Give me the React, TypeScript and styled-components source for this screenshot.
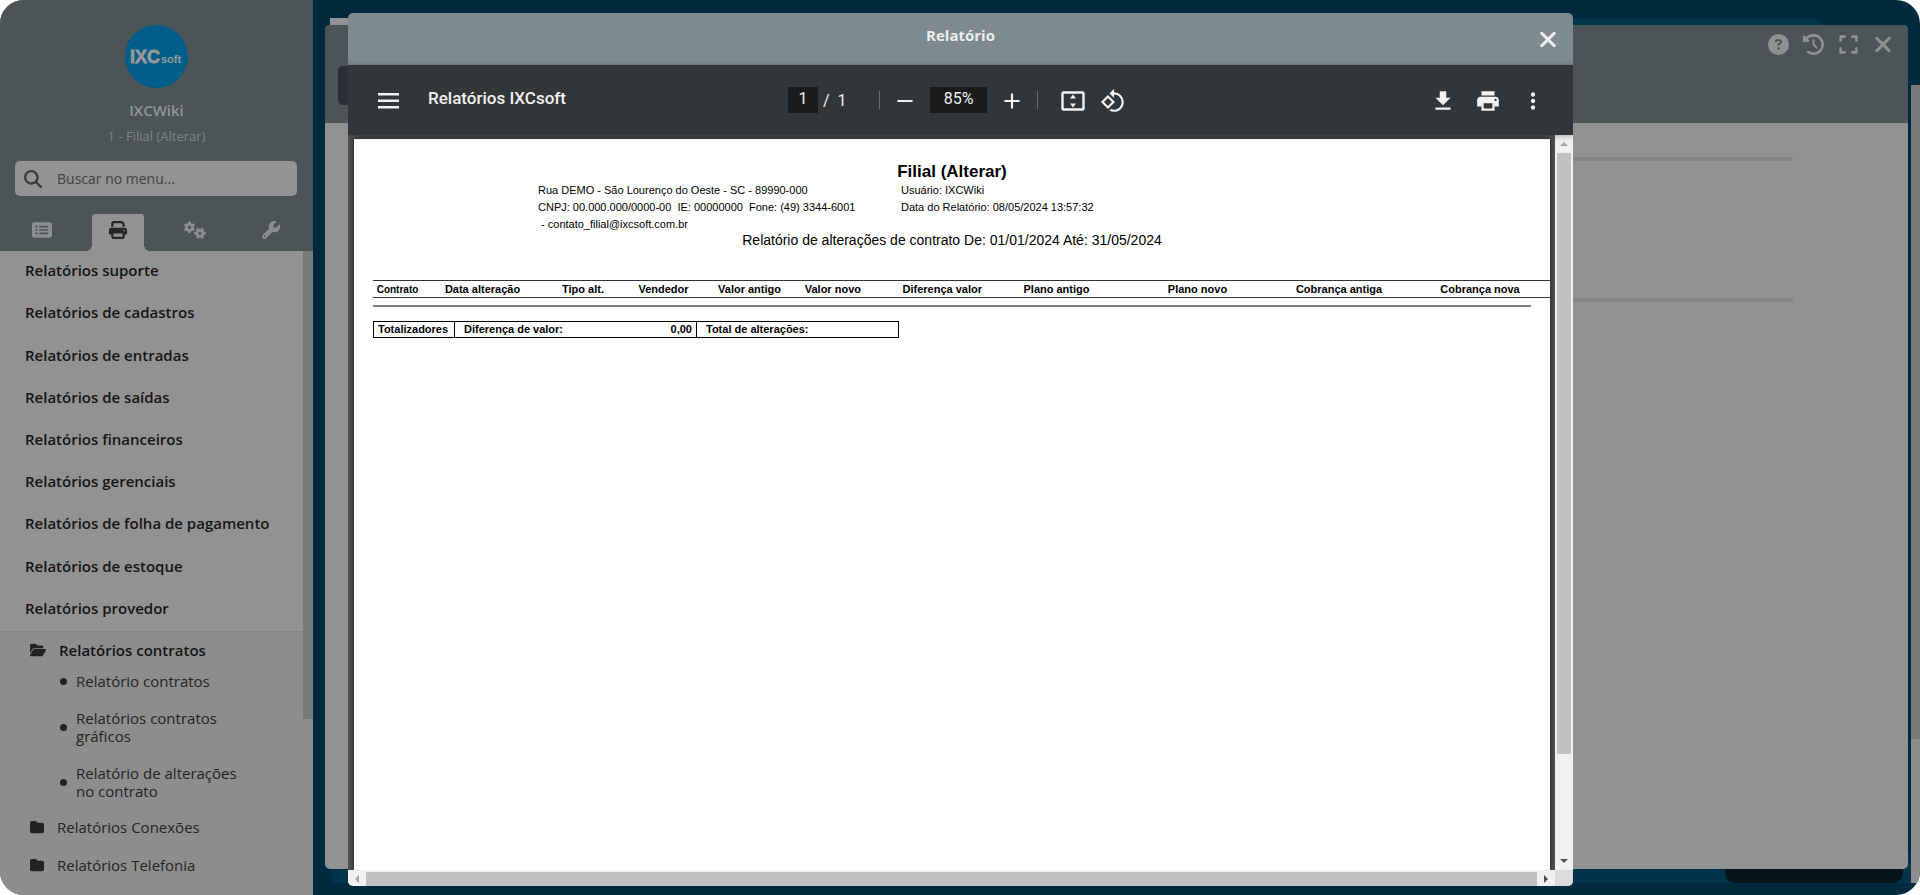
import React from 'react';
import styled, { createGlobalStyle, css } from 'styled-components';
import {
  FaCircleQuestion,
  FaClockRotateLeft,
  FaExpand,
  FaFolder,
  FaFolderOpen,
  FaGears,
  FaMagnifyingGlass,
  FaPrint,
  FaRectangleList,
  FaWrench,
  FaXmark,
} from 'react-icons/fa6';
import { MdAdd, MdFileDownload, MdMoreVert, MdPrint, MdRemove, MdRotate90DegreesCcw } from 'react-icons/md';

const sans = `'Open Sans', 'Noto Sans', sans-serif`;
const report = `'Liberation Sans', Arial, sans-serif`;

const GlobalStyle = createGlobalStyle`
  *, *::before, *::after { box-sizing: border-box; }
  body { margin: 0; background: #fff; font-family: ${sans}; font-size: 15px; }
  button { border: 0; padding: 0; background: none; font: inherit; color: inherit; cursor: pointer; }
  ul { list-style: none; margin: 0; padding: 0; }
  h1, h2, p { margin: 0; }
  a { color: inherit; text-decoration: none; }
  svg { display: block; }
`;

const Shell = styled.div`
  position: relative;
  display: flex;
  height: 100vh;
  overflow: hidden;
  border-radius: 24px;
  background: #002b3f;
`;

/* ---------- Sidebar ---------- */

const Sidebar = styled.aside`
  flex: none;
  width: 313px;
  display: flex;
  flex-direction: column;
  background: #929292;
`;

const SideHeader = styled.header`
  flex: none;
  display: flex;
  flex-direction: column;
  align-items: center;
  padding-top: 25px;
  background: #4b5457;
`;

const UserName = styled.p`
  margin-top: 10px;
  font-size: 15px;
  line-height: 24px;
  font-weight: 600;
  color: #929697;
`;

const Branch = styled.p`
  margin-top: 5px;
  font-size: 13px;
  line-height: 18px;
  color: #7e8486;
`;

const Search = styled.label`
  align-self: stretch;
  display: flex;
  align-items: center;
  gap: 13px;
  height: 35px;
  margin: 16px 16px 0 15px;
  padding-left: 9px;
  border-radius: 5px;
  background: #939393;
  color: #3a3a3a;
`;

const SearchInput = styled.input`
  flex: 1;
  min-width: 0;
  border: 0;
  background: none;
  outline: none;
  font: 14px ${sans};
  color: #3f3f3f;
  &::placeholder { color: #414141; opacity: 1; }
`;

const Tabs = styled.nav`
  align-self: stretch;
  display: flex;
  justify-content: space-around;
  margin-top: 18px;
  padding: 0 4px;
`;

const Tab = styled.button<{ $active?: boolean }>`
  position: relative;
  display: flex;
  align-items: center;
  justify-content: center;
  width: 52px;
  height: 37px;
  padding-bottom: 6px;
  border-radius: 3px 3px 0 0;
  color: #8b8f90;
  ${({ $active }) =>
    $active &&
    css`
      background: #929292;
      color: #262626;
      &::before,
      &::after {
        content: '';
        position: absolute;
        bottom: 0;
        width: 6px;
        height: 6px;
      }
      &::before {
        right: 100%;
        background: radial-gradient(circle at 0 0, #4b5457 6px, #929292 6px);
      }
      &::after {
        left: 100%;
        background: radial-gradient(circle at 100% 0, #4b5457 6px, #929292 6px);
      }
    `}
`;

const SideBody = styled.div`
  flex: 1;
  min-height: 0;
  display: flex;
`;

const MenuColumn = styled.div`
  flex: 1;
  min-width: 0;
  overflow: hidden;
  display: flex;
  flex-direction: column;
`;

const SideScroll = styled.div`
  flex: none;
  width: 10px;
  background: #8d8d8d;
`;

const SideThumb = styled.div`
  height: 468px;
  background: #797979;
`;

const MainMenu = styled.ul`
  flex: none;
  display: grid;
  grid-template-rows: repeat(9, 1fr);
  height: 380px;
`;

const MainItem = styled.li`
  display: flex;
  align-items: center;
  padding: 0 0 4px 25px;
  font-weight: 600;
  color: #151515;
`;

const Section = styled.div`
  flex: 1;
  border-top: 1px solid #848484;
  background: #8d8d8d;
  color: #242424;
`;

const FolderRow = styled.button<{ $open?: boolean }>`
  display: flex;
  align-items: center;
  gap: 13px;
  width: 100%;
  height: ${({ $open }) => ($open ? 35 : 38)}px;
  padding-left: 30px;
  font-weight: ${({ $open }) => ($open ? 600 : 400)};
  color: ${({ $open }) => ($open ? '#151515' : '#242424')};
  svg { color: #222; }
`;

const SubMenu = styled.ul`
  display: flex;
  flex-direction: column;
  gap: 19px;
  padding: 5px 60px 8px;
`;

const SubItem = styled.li`
  display: flex;
  align-items: center;
  gap: 9px;
  line-height: 18px;
  &::before {
    content: '';
    flex: none;
    width: 7px;
    height: 7px;
    border-radius: 50%;
    background: #222;
  }
`;

/* ---------- Desktop behind the report ---------- */

const Desktop = styled.main`
  position: relative;
  flex: 1;
  min-width: 0;
  display: flex;
  padding: 25px 12px 26px;
`;

const Backdrop = styled.div`
  position: absolute;
  top: 18px;
  left: 17px;
  right: 90px;
  height: 60px;
  border-radius: 0 24px 0 0;
  background: linear-gradient(to right, #939393 60px, #00374d 60px);
`;

const Footer = styled.div`
  position: absolute;
  left: 18px;
  right: 9px;
  bottom: 12px;
  height: 30px;
  background: #00344a;
`;

const Notice = styled.div`
  position: absolute;
  right: 17px;
  bottom: 12px;
  width: 178px;
  height: 40px;
  border-radius: 10px;
  background: #071419;
`;

const PageScroll = styled.div`
  position: absolute;
  top: 85px;
  right: 0;
  bottom: 12px;
  width: 9px;
  background: linear-gradient(to bottom, #797979 82%, #8d8d8d 82%);
`;

const Window = styled.section`
  position: relative;
  flex: 1;
  display: flex;
  flex-direction: column;
  overflow: hidden;
  border-radius: 5px;
  background: #929292;
`;

const WindowHeader = styled.header`
  display: flex;
  justify-content: space-between;
  align-items: flex-start;
  height: 98px;
  padding: 8px 14px 0 13px;
  background: #4b5457;
`;

const WindowAction = styled.button`
  width: 120px;
  height: 39px;
  margin-top: 33px;
  border-radius: 5px;
  background: #273036;
`;

const WindowTools = styled.div`
  display: flex;
  gap: 13px;
  color: #8f9191;
`;

const ToolButton = styled.button`
  display: flex;
  align-items: center;
  justify-content: center;
  width: 22px;
  height: 22px;
`;

const WindowBody = styled.div`
  display: flex;
  flex-direction: column;
  gap: 137px;
  padding: 34px 115px 0 60px;
`;

const Rule = styled.div`
  height: 4px;
  border-radius: 2px;
  background: #848484;
`;

/* ---------- Report dialog ---------- */

const Overlay = styled.div`
  position: absolute;
  inset: 0;
  display: flex;
  padding: 13px 347px 9px 348px;
`;

const Dialog = styled.div`
  flex: 1;
  min-width: 0;
  display: flex;
  flex-direction: column;
  overflow: hidden;
  border-radius: 5px;
  background: #7d8a8f;
`;

const DialogHeader = styled.header`
  flex: none;
  display: grid;
  grid-template-columns: 1fr auto 1fr;
  height: 52px;
  padding: 0 14px;
  color: #ededed;
`;

const DialogTitle = styled.h1`
  grid-column: 2;
  padding-top: 10px;
  font-size: 15px;
  line-height: 24px;
  font-weight: 700;
`;

const CloseButton = styled(ToolButton)`
  align-self: center;
  justify-self: end;
`;

const Toolbar = styled.div`
  position: relative;
  z-index: 1;
  flex: none;
  display: grid;
  grid-template-columns: 1fr auto 1fr;
  align-items: center;
  height: 70px;
  padding: 0 27px 0 30px;
  background: #323639;
  box-shadow: 0 1px 6px rgba(0, 0, 0, 0.3);
  color: #f1f1f1;
  font-family: Roboto, sans-serif;
`;

const Group = styled.div<{ $gap: number }>`
  display: flex;
  align-items: center;
  gap: ${({ $gap }) => $gap}px;
`;

const RightGroup = styled(Group)`
  justify-content: flex-end;
`;

const CenterGroup = styled(Group)`
  padding-right: 10px;
`;

const ViewGroup = styled(Group)`
  padding-left: 10px;
`;

const FileName = styled.h2`
  padding-bottom: 4px;
  font-size: 17px;
  line-height: 24px;
  font-weight: 500;
`;

const Pager = styled.label`
  display: flex;
  align-items: center;
  width: 79px;
  font-size: 16px;
  white-space: pre;
`;

const Field = styled.input<{ $width: number }>`
  width: ${({ $width }) => $width}px;
  height: 26px;
  margin-right: 5px;
  padding: 0 0 3px;
  border: 0;
  background: #191b1c;
  color: #f1f1f1;
  font: 16px Roboto, sans-serif;
  text-align: center;
`;

const ZoomField = styled(Field)`
  margin: 0;
`;

const Divider = styled.span`
  width: 1px;
  height: 18px;
  background: #696c6e;
`;

const IconButton = styled.button`
  display: flex;
  align-items: center;
  justify-content: center;
  width: 26px;
  height: 28px;
  padding-top: 2px;
`;

const MenuButton = styled(IconButton)`
  width: 21px;
`;

const Viewer = styled.div`
  flex: 1;
  min-height: 0;
  display: grid;
  grid-template-columns: 1fr 18px;
  grid-template-rows: 1fr 16px;
`;

const Canvas = styled.div`
  min-width: 0;
  min-height: 0;
  overflow: hidden;
  display: flex;
  padding: 4px 5px 0 6px;
  background: #525659;
`;

const Paper = styled.article`
  flex: 1;
  min-width: 0;
  overflow: hidden;
  padding: 22px 0 0 19px;
  background: #fff;
  box-shadow: 0 0 6px #111;
  color: #000;
  font-family: ${report};
  font-size: 11px;
`;

const Heading = styled.div`
  margin-right: 19px;
  text-align: center;
`;

const Company = styled.h2`
  font-size: 17px;
  line-height: 21px;
`;

const Info = styled.div`
  display: grid;
  grid-template-columns: 363px 465px;
  justify-content: center;
  line-height: 17px;
  text-align: left;
  white-space: pre;
`;

const Subject = styled.p`
  font-size: 14px;
  line-height: 14px;
`;

const Columns = styled.table`
  width: 100%;
  margin-top: 33px;
  table-layout: fixed;
  border-collapse: collapse;
`;

const Column = styled.th<{ $width?: number; $right?: boolean; $narrow?: boolean }>`
  width: ${({ $width }) => ($width ? `${$width}px` : 'auto')};
  height: 17px;
  padding: 0 ${({ $right }) => ($right ? 4 : 0)}px 0 0;
  border-top: 1px solid #333;
  border-bottom: 1px solid #333;
  font-size: ${({ $narrow }) => ($narrow ? 10 : 11)}px;
  line-height: 15px;
  text-align: ${({ $right }) => ($right ? 'right' : 'center')};
  white-space: nowrap;
`;

const EndRule = styled.div`
  height: 2px;
  margin: 7px 19px 0 0;
  background: #7f7f7f;
`;

const Totals = styled.table`
  margin-top: 14px;
  table-layout: fixed;
  border-collapse: collapse;
  width: 525px;
`;

const TotalCell = styled.td<{ $width: number; $right?: boolean; $open?: boolean }>`
  width: ${({ $width }) => $width}px;
  height: 16px;
  padding: 0 4px 0 ${({ $open }) => ($open ? 9 : 4)}px;
  border: 1px solid #000;
  ${({ $open }) => $open && 'border-right: 0;'}
  ${({ $right }) => $right && 'border-left: 0;'}
  font-weight: 700;
  line-height: 15px;
  text-align: ${({ $right }) => ($right ? 'right' : 'left')};
  white-space: nowrap;
`;

const VScroll = styled.div`
  display: flex;
  flex-direction: column;
  padding: 0 2px;
  background: #f1f1f1;
`;

const HScroll = styled.div`
  display: flex;
  padding: 2px 0 0;
  background: #f1f1f1;
`;

const Arrow = styled.span`
  flex: none;
  display: flex;
  align-items: center;
  justify-content: center;
  min-width: 14px;
  min-height: 14px;
`;

const VArrow = styled(Arrow)`
  height: 18px;
`;

const HArrow = styled(Arrow)`
  width: 18px;
`;

const VTrack = styled.div`
  flex: 1;
`;

const VThumb = styled.div`
  height: 86%;
  background: #c1c1c1;
`;

const HThumb = styled.div`
  flex: 1;
  background: #c1c1c1;
`;

const Corner = styled.div`
  background: #dcdcdc;
`;

/* ---------- Data ---------- */

const menu = [
  'Relatórios suporte',
  'Relatórios de cadastros',
  'Relatórios de entradas',
  'Relatórios de saídas',
  'Relatórios financeiros',
  'Relatórios gerenciais',
  'Relatórios de folha de pagamento',
  'Relatórios de estoque',
  'Relatórios provedor',
];

const contractReports = ['Relatório contratos', 'Relatórios contratos gráficos', 'Relatório de alterações no contrato'];

const columns: { label: string; width?: number; right?: boolean; narrow?: boolean }[] = [
  { label: 'Contrato', width: 49, narrow: true },
  { label: 'Data alteração', width: 121 },
  { label: 'Tipo alt.', width: 80 },
  { label: 'Vendedor', width: 81 },
  { label: 'Valor antigo', width: 81, right: true },
  { label: 'Valor novo', width: 80, right: true },
  { label: 'Diferença valor', width: 121, right: true },
  { label: 'Plano antigo', width: 141 },
  { label: 'Plano novo', width: 141 },
  { label: 'Cobrança antiga', width: 142 },
  { label: 'Cobrança nova' },
];

function Logo() {
  return (
    <svg width="63" height="63" viewBox="0 0 63 63" role="img" aria-label="IXCsoft">
      <circle cx="31.5" cy="31.5" r="31.5" fill="#005f8a" />
      <g fill="#999" fontFamily="Liberation Sans, Arial, sans-serif" fontWeight="700">
        <text x="5" y="38" fontSize="18" stroke="#999" strokeWidth="0.8">IXC</text>
        <text x="36" y="38" fontSize="11">soft</text>
      </g>
    </svg>
  );
}

function FitPageIcon() {
  return (
    <svg width="24" height="20" viewBox="0 0 24 20" fill="none">
      <rect x="1.5" y="1.5" width="21" height="17" rx="1" stroke="currentColor" strokeWidth="2.4" />
      <path d="M12 3.4 15 7.4H9zM12 16.6 15 12.6H9z" fill="currentColor" />
    </svg>
  );
}

function MenuIcon() {
  return (
    <svg width="21" height="16" viewBox="0 0 21 16" fill="currentColor">
      <path d="M0 0h21v2.5H0zM0 6.5h21V9H0zM0 13h21v2.5H0z" />
    </svg>
  );
}

function Triangle({ angle, color }: { angle: number; color: string }) {
  return (
    <svg width="8" height="8" viewBox="0 0 8 8">
      <path d="M4 2 8 6H0z" fill={color} transform={`rotate(${angle} 4 4)`} />
    </svg>
  );
}

function SideNav() {
  return (
    <Sidebar>
      <SideHeader>
        <Logo />
        <UserName>IXCWiki</UserName>
        <Branch>1 - Filial (Alterar)</Branch>
        <Search>
          <FaMagnifyingGlass size={18} />
          <SearchInput type="text" placeholder="Buscar no menu..." aria-label="Buscar no menu" />
        </Search>
        <Tabs>
          <Tab aria-label="Menu"><FaRectangleList size={20} /></Tab>
          <Tab $active aria-label="Relatórios"><FaPrint size={18} /></Tab>
          <Tab aria-label="Configurações"><FaGears size={22} /></Tab>
          <Tab aria-label="Ferramentas"><FaWrench size={18} /></Tab>
        </Tabs>
      </SideHeader>
      <SideBody>
        <MenuColumn>
          <MainMenu>
            {menu.map((item) => (
              <MainItem key={item}><a href="#">{item}</a></MainItem>
            ))}
          </MainMenu>
          <Section>
            <FolderRow $open><FaFolderOpen size={16} />Relatórios contratos</FolderRow>
            <SubMenu>
              {contractReports.map((item) => (
                <SubItem key={item}><a href="#">{item}</a></SubItem>
              ))}
            </SubMenu>
            <FolderRow><FaFolder size={14} />Relatórios Conexões</FolderRow>
            <FolderRow><FaFolder size={14} />Relatórios Telefonia</FolderRow>
          </Section>
        </MenuColumn>
        <SideScroll><SideThumb /></SideScroll>
      </SideBody>
    </Sidebar>
  );
}

function ReportPaper() {
  return (
    <Paper>
      <Heading>
        <Company>Filial (Alterar)</Company>
        <Info>
          <div>
            <p>Rua DEMO - São Lourenço do Oeste - SC - 89990-000</p>
            <p>{'CNPJ: 00.000.000/0000-00  IE: 00000000  Fone: (49) 3344-6001'}</p>
            <p>{' - contato_filial@ixcsoft.com.br'}</p>
          </div>
          <div>
            <p>Usuário: IXCWiki</p>
            <p>Data do Relatório: 08/05/2024 13:57:32</p>
          </div>
        </Info>
        <Subject>Relatório de alterações de contrato De: 01/01/2024 Até: 31/05/2024</Subject>
      </Heading>
      <Columns>
        <thead>
          <tr>
            {columns.map((c) => (
              <Column key={c.label} $width={c.width} $right={c.right} $narrow={c.narrow}>{c.label}</Column>
            ))}
          </tr>
        </thead>
      </Columns>
      <EndRule />
      <Totals>
        <tbody>
          <tr>
            <TotalCell $width={81}>Totalizadores</TotalCell>
            <TotalCell $width={121} $open>Diferença de valor:</TotalCell>
            <TotalCell $width={121} $right>0,00</TotalCell>
            <TotalCell $width={121} $open>Total de alterações:</TotalCell>
            <TotalCell $width={81} $right />
          </tr>
        </tbody>
      </Totals>
    </Paper>
  );
}

function ReportDialog() {
  return (
    <Overlay>
      <Dialog role="dialog" aria-label="Relatório">
        <DialogHeader>
          <DialogTitle>Relatório</DialogTitle>
          <CloseButton aria-label="Fechar"><FaXmark size={25} /></CloseButton>
        </DialogHeader>
        <Toolbar>
          <Group $gap={29}>
            <MenuButton aria-label="Menu"><MenuIcon /></MenuButton>
            <FileName>Relatórios IXCsoft</FileName>
          </Group>
          <CenterGroup $gap={12}>
            <Pager>
              <Field $width={30} defaultValue="1" aria-label="Página" />
              {'/  1'}
            </Pager>
            <Divider />
            <IconButton aria-label="Diminuir zoom"><MdRemove size={26} /></IconButton>
            <ZoomField $width={57} defaultValue="85%" aria-label="Zoom" />
            <IconButton aria-label="Aumentar zoom"><MdAdd size={26} /></IconButton>
            <Divider />
            <ViewGroup $gap={14}>
              <IconButton aria-label="Ajustar à página"><FitPageIcon /></IconButton>
              <IconButton aria-label="Girar"><MdRotate90DegreesCcw size={26} /></IconButton>
            </ViewGroup>
          </CenterGroup>
          <RightGroup $gap={19}>
            <IconButton aria-label="Baixar"><MdFileDownload size={26} /></IconButton>
            <IconButton aria-label="Imprimir"><MdPrint size={26} /></IconButton>
            <IconButton aria-label="Mais ações"><MdMoreVert size={26} /></IconButton>
          </RightGroup>
        </Toolbar>
        <Viewer>
          <Canvas><ReportPaper /></Canvas>
          <VScroll>
            <VArrow><Triangle angle={0} color="#a3a3a3" /></VArrow>
            <VTrack><VThumb /></VTrack>
            <VArrow><Triangle angle={180} color="#505050" /></VArrow>
          </VScroll>
          <HScroll>
            <HArrow><Triangle angle={270} color="#a3a3a3" /></HArrow>
            <HThumb />
            <HArrow><Triangle angle={90} color="#505050" /></HArrow>
          </HScroll>
          <Corner />
        </Viewer>
      </Dialog>
    </Overlay>
  );
}

export default function App() {
  return (
    <>
      <GlobalStyle />
      <Shell>
        <SideNav />
        <Desktop>
          <Backdrop />
          <Footer />
          <Notice />
          <PageScroll />
          <Window>
            <WindowHeader>
              <WindowAction aria-label="Ações" />
              <WindowTools>
                <ToolButton aria-label="Ajuda"><FaCircleQuestion size={21} /></ToolButton>
                <ToolButton aria-label="Histórico"><FaClockRotateLeft size={21} /></ToolButton>
                <ToolButton aria-label="Expandir"><FaExpand size={21} /></ToolButton>
                <ToolButton aria-label="Fechar janela"><FaXmark size={25} /></ToolButton>
              </WindowTools>
            </WindowHeader>
            <WindowBody>
              <Rule />
              <Rule />
            </WindowBody>
          </Window>
        </Desktop>
        <ReportDialog />
      </Shell>
    </>
  );
}
